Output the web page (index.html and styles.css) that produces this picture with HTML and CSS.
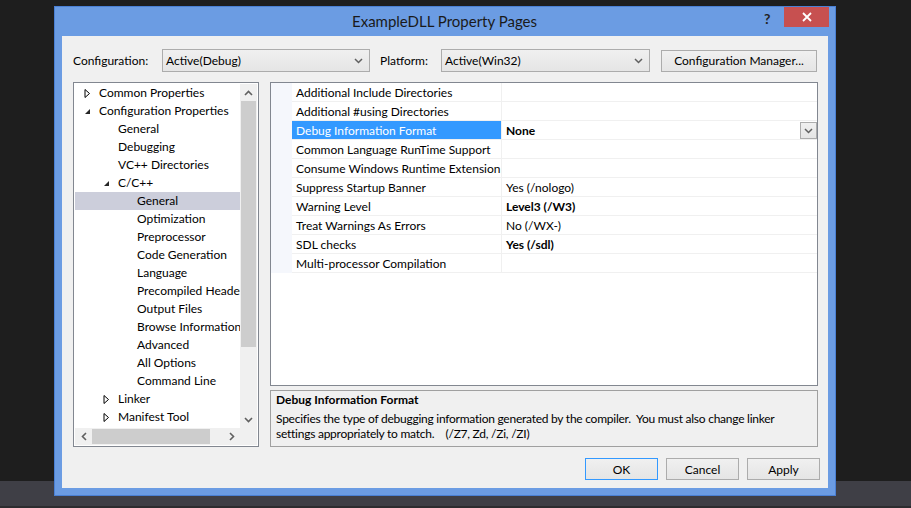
FILE: index.html
```html
<!DOCTYPE html>
<html>
<head>
<meta charset="utf-8">
<link rel="stylesheet" href="styles.css">
</head>
<body>
<div class="window">
  <div class="titlebar">
    <div class="title">ExampleDLL Property Pages</div>
    <div class="help">?</div>
    <div class="close">
      <svg width="10" height="10" viewBox="0 0 10 10"><path d="M1 1 L9 9 M9 1 L1 9" stroke="#fff" stroke-width="1.8"/></svg>
    </div>
  </div>
  <div class="client">
    <div class="configrow">
      <span class="lbl lbl-config">Configuration:</span>
      <div class="combo combo-config"><span>Active(Debug)</span><svg class="chev" width="9" height="6" viewBox="0 0 9 6"><path d="M1 1 L4.5 4.5 L8 1" fill="none" stroke="#606060" stroke-width="1.5"/></svg></div>
      <span class="lbl lbl-platform">Platform:</span>
      <div class="combo combo-platform"><span>Active(Win32)</span><svg class="chev" width="9" height="6" viewBox="0 0 9 6"><path d="M1 1 L4.5 4.5 L8 1" fill="none" stroke="#606060" stroke-width="1.5"/></svg></div>
      <div class="btn btn-cfgmgr">Configuration Manager...</div>
    </div>
    <div class="main">
      <div class="tree">
        <div class="tree-items">
          <div class="ti l0"><svg class="exp" width="7" height="9" viewBox="0 0 7 9"><path d="M1 0.5 L5.5 4.5 L1 8.5 Z" fill="none" stroke="#000" stroke-width="1"/></svg>Common Properties</div>
          <div class="ti l0"><svg class="exp" width="7" height="9" viewBox="0 0 7 9"><path d="M6 2 L6 7 L1 7 Z" fill="#262626"/></svg>Configuration Properties</div>
          <div class="ti l1">General</div>
          <div class="ti l1">Debugging</div>
          <div class="ti l1">VC++ Directories</div>
          <div class="ti l1x"><svg class="exp" width="7" height="9" viewBox="0 0 7 9"><path d="M6 2 L6 7 L1 7 Z" fill="#262626"/></svg>C/C++</div>
          <div class="ti l2 sel">General</div>
          <div class="ti l2">Optimization</div>
          <div class="ti l2">Preprocessor</div>
          <div class="ti l2">Code Generation</div>
          <div class="ti l2">Language</div>
          <div class="ti l2">Precompiled Headers</div>
          <div class="ti l2">Output Files</div>
          <div class="ti l2">Browse Information</div>
          <div class="ti l2">Advanced</div>
          <div class="ti l2">All Options</div>
          <div class="ti l2">Command Line</div>
          <div class="ti l1x"><svg class="exp" width="7" height="9" viewBox="0 0 7 9"><path d="M1 0.5 L5.5 4.5 L1 8.5 Z" fill="none" stroke="#000" stroke-width="1"/></svg>Linker</div>
          <div class="ti l1x"><svg class="exp" width="7" height="9" viewBox="0 0 7 9"><path d="M1 0.5 L5.5 4.5 L1 8.5 Z" fill="none" stroke="#000" stroke-width="1"/></svg>Manifest Tool</div>
        </div>
        <div class="vscroll">
          <div class="sarrow"><svg width="9" height="6" viewBox="0 0 9 6"><path d="M1 5 L4.5 1.5 L8 5" fill="none" stroke="#606060" stroke-width="1.6"/></svg></div>
          <div class="vthumb"></div>
          <div class="vtrack"></div>
          <div class="sarrow"><svg width="9" height="6" viewBox="0 0 9 6"><path d="M1 1 L4.5 4.5 L8 1" fill="none" stroke="#606060" stroke-width="1.6"/></svg></div>
        </div>
        <div class="hscroll">
          <div class="harrow"><svg width="6" height="9" viewBox="0 0 6 9"><path d="M5 1 L1.5 4.5 L5 8" fill="none" stroke="#606060" stroke-width="1.6"/></svg></div>
          <div class="hthumb"></div>
          <div class="htrack"></div>
          <div class="harrow"><svg width="6" height="9" viewBox="0 0 6 9"><path d="M1 1 L4.5 4.5 L1 8" fill="none" stroke="#606060" stroke-width="1.6"/></svg></div>
        </div>
        <div class="corner"></div>
      </div>
      <div class="right">
        <div class="grid">
          <div class="row"><div class="stripe"></div><div class="name">Additional Include Directories</div><div class="val"></div></div>
          <div class="row"><div class="stripe"></div><div class="name">Additional #using Directories</div><div class="val"></div></div>
          <div class="row"><div class="stripe"></div><div class="name sel">Debug Information Format</div><div class="val b">None<div class="dd"><svg width="9" height="6" viewBox="0 0 9 6"><path d="M1 1 L4.5 4.5 L8 1" fill="none" stroke="#606060" stroke-width="1.5"/></svg></div></div></div>
          <div class="row"><div class="stripe"></div><div class="name">Common Language RunTime Support</div><div class="val"></div></div>
          <div class="row"><div class="stripe"></div><div class="name">Consume Windows Runtime Extension</div><div class="val"></div></div>
          <div class="row"><div class="stripe"></div><div class="name">Suppress Startup Banner</div><div class="val">Yes (/nologo)</div></div>
          <div class="row"><div class="stripe"></div><div class="name">Warning Level</div><div class="val b">Level3 (/W3)</div></div>
          <div class="row"><div class="stripe"></div><div class="name">Treat Warnings As Errors</div><div class="val">No (/WX-)</div></div>
          <div class="row"><div class="stripe"></div><div class="name">SDL checks</div><div class="val b">Yes (/sdl)</div></div>
          <div class="row"><div class="stripe"></div><div class="name">Multi-processor Compilation</div><div class="val"></div></div>
        </div>
        <div class="desc">
          <div class="desc-title">Debug Information Format</div>
          <div class="desc-text">Specifies the type of debugging information generated by the compiler.&nbsp; You must also change linker settings appropriately to match.&nbsp;&nbsp;&nbsp; (/Z7, Zd, /Zi, /ZI)</div>
        </div>
      </div>
    </div>
    <div class="buttons">
      <div class="btn btn-dlg btn-ok">OK</div>
      <div class="btn btn-dlg">Cancel</div>
      <div class="btn btn-dlg">Apply</div>
    </div>
  </div>
</div>
</body>
</html>
```

FILE: styles.css
```css
html, body {
  margin: 0;
  padding: 0;
}
body {
  width: 911px;
  height: 508px;
  overflow: hidden;
  background: linear-gradient(to bottom, #1e1e1e 0, #1e1e1e 481px, #3f3f46 481px, #3f3f46 506px, #2d2d30 506px);
  font-family: Lato, "Liberation Sans", sans-serif;
  font-size: 12px;
  color: #000;
}
.window {
  margin: 6px 0 0 54px;
  width: 782px;
  height: 490px;
  box-sizing: border-box;
  background: #6b9ce3;
  border: 1px solid #4a80d4;
  padding: 0 7px 7px 7px;
  display: flex;
  flex-direction: column;
}
.titlebar {
  height: 29px;
  display: flex;
  align-items: flex-start;
}
.title {
  flex: 1;
  text-align: center;
  font-size: 15px;
  color: #1a1a1a;
  padding-top: 5px;
  padding-left: 63px;
}
.help {
  font-weight: bold;
  font-size: 14px;
  color: #222;
  width: 14px;
  padding-top: 3px;
  margin-right: 6px;
}
.close {
  width: 45px;
  height: 20px;
  background: #c75050;
  display: flex;
  align-items: center;
  justify-content: center;
  margin-right: -1px;
}
.client {
  flex: 1;
  background: #f0f0f0;
  padding: 13px 8px 0 11px;
  display: flex;
  flex-direction: column;
}
.configrow {
  display: flex;
  align-items: center;
  height: 23px;
}
.lbl-config { width: 89px; }
.lbl-platform { margin-left: 10px; width: 61px; }
.combo {
  height: 23px;
  box-sizing: border-box;
  border: 1px solid #acacac;
  background: linear-gradient(#f0f0f0, #e5e5e5);
  display: flex;
  align-items: center;
  justify-content: space-between;
  padding: 0 6px 0 3px;
}
.combo-config { width: 208px; }
.combo-platform { width: 209px; }
.btn {
  box-sizing: border-box;
  border: 1px solid #acacac;
  background: linear-gradient(#f0f0f0, #e5e5e5);
  display: flex;
  align-items: center;
  justify-content: center;
}
.btn-cfgmgr {
  margin-left: 11px;
  width: 156px;
  height: 22px;
}
.main {
  margin-top: 10px;
  display: flex;
  gap: 11px;
  height: 365px;
}
.tree {
  width: 186px;
  box-sizing: border-box;
  border: 1px solid #828790;
  background: #fff;
  display: grid;
  grid-template-columns: 1fr 17px;
  grid-template-rows: 1fr 17px;
  padding: 1px;
}
.tree-items {
  overflow: hidden;
  background: #fff;
}
.ti {
  height: 18px;
  line-height: 18px;
  white-space: nowrap;
  display: flex;
  align-items: center;
}
.ti .exp { flex: none; margin-right: 8px; }
.l0 { padding-left: 9px; }
.l1 { padding-left: 43px; }
.l1x { padding-left: 28px; }
.l2 { padding-left: 62px; }
.ti.sel { background: #cccedb; }
.vscroll {
  background: #f0f0f0;
  display: flex;
  flex-direction: column;
}
.sarrow {
  height: 17px;
  display: flex;
  align-items: center;
  justify-content: center;
  flex: none;
}
.vthumb {
  height: 246px;
  background: #cdcdcd;
  margin: 0 1px;
  flex: none;
}
.vtrack { flex: 1; }
.hscroll {
  background: #f0f0f0;
  display: flex;
}
.harrow {
  width: 17px;
  display: flex;
  align-items: center;
  justify-content: center;
  flex: none;
}
.hthumb {
  width: 118px;
  background: #cdcdcd;
  margin: 1px 0;
  flex: none;
}
.htrack { flex: 1; }
.corner { background: #f0f0f0; }
.right {
  width: 548px;
  display: flex;
  flex-direction: column;
  gap: 4px;
}
.grid {
  height: 304px;
  box-sizing: border-box;
  border: 1px solid #828790;
  background: #fff;
}
.row {
  display: flex;
  height: 19px;
}
.stripe {
  width: 21px;
  background: #f5f7fc;
  flex: none;
}
.name {
  width: 210px;
  flex: none;
  box-sizing: border-box;
  padding: 1px 0 0 4px;
  line-height: 17px;
  border-bottom: 1px solid #f0f0f0;
  border-right: 1px solid #f0f0f0;
  white-space: nowrap;
  overflow: hidden;
}
.name.sel {
  background: #3399ff;
  color: #fff;
}
.val {
  flex: 1;
  box-sizing: border-box;
  padding: 1px 0 0 4px;
  line-height: 17px;
  border-bottom: 1px solid #f0f0f0;
  display: flex;
  justify-content: space-between;
}
.val.b { font-weight: bold; }
.dd {
  width: 17px;
  height: 17px;
  box-sizing: border-box;
  border: 1px solid #acacac;
  background: linear-gradient(#f0f0f0, #e5e5e5);
  display: flex;
  align-items: center;
  justify-content: center;
}
.desc {
  flex: 1;
  box-sizing: border-box;
  border: 1px solid #a0a0a0;
  background: #f0f0f0;
  padding: 1px 5px;
}
.desc-title {
  font-weight: bold;
  line-height: 16px;
  margin-bottom: 3px;
}
.desc-text {
  line-height: 15px;
  letter-spacing: -0.25px;
}
.buttons {
  display: flex;
  justify-content: flex-end;
  gap: 8px;
  margin-top: 11px;
}
.btn-dlg {
  width: 73px;
  height: 22px;
}
.btn-ok {
  border-color: #3399ff;
}
```
